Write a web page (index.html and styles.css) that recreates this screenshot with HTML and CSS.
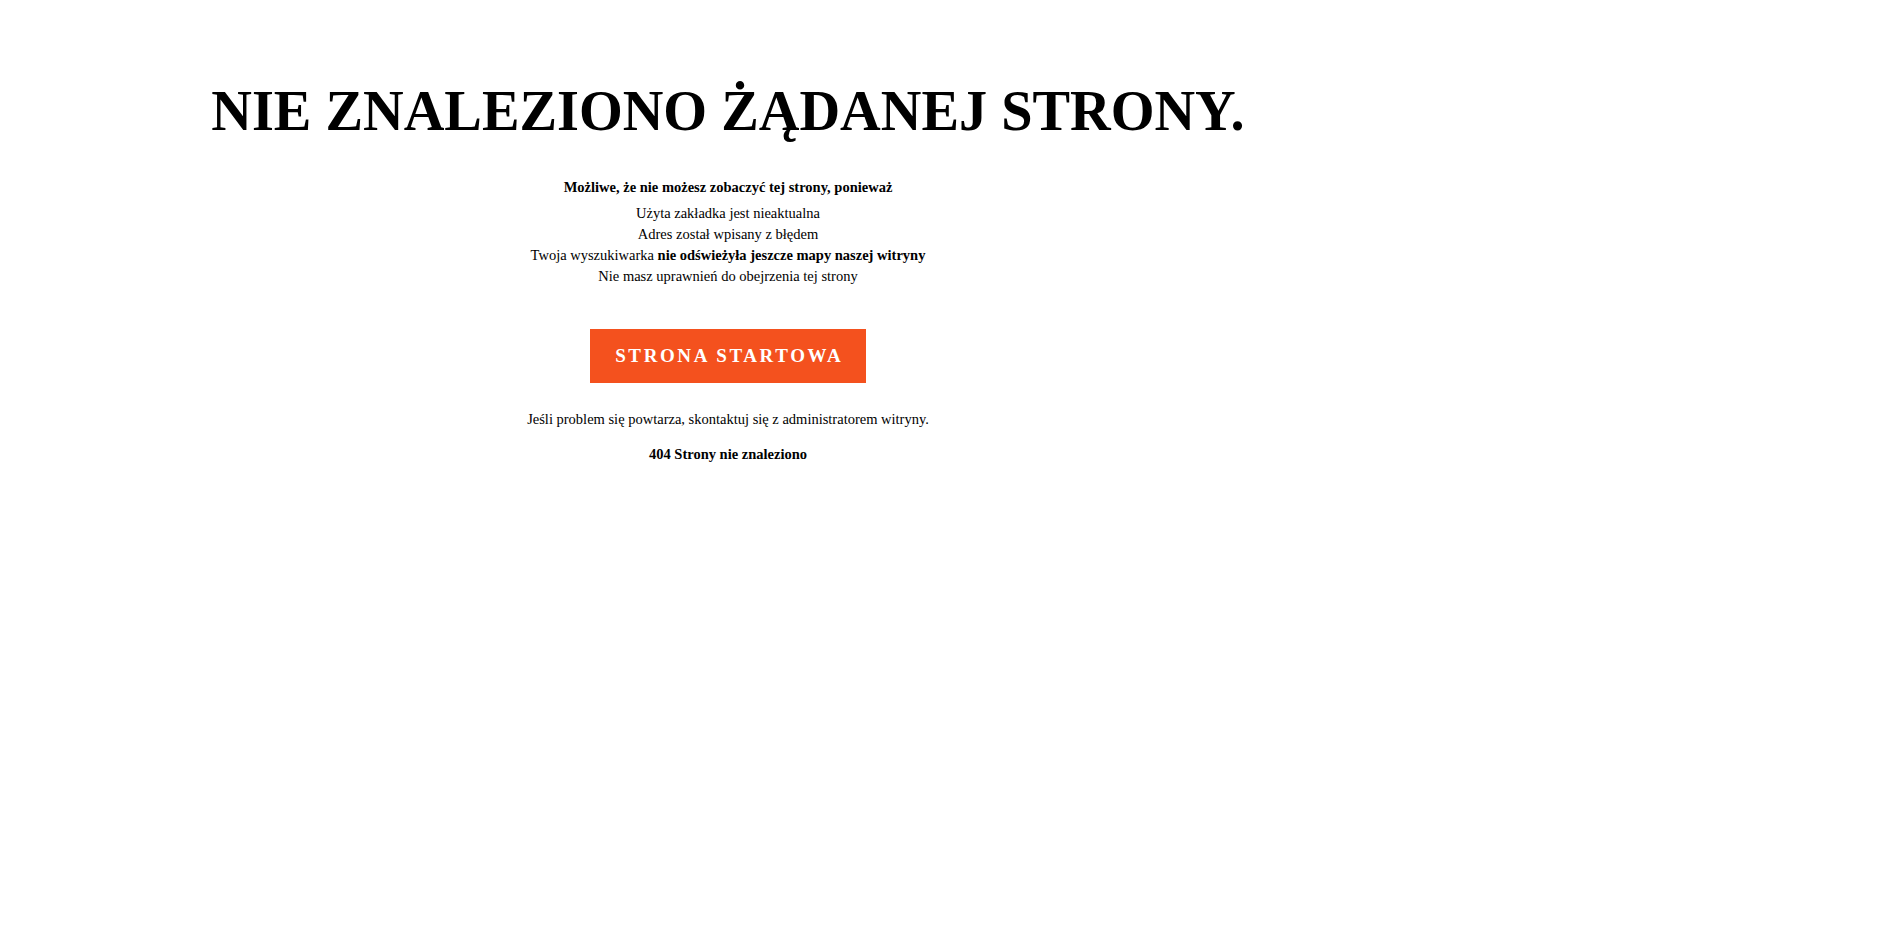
FILE: index.html
```html
<!DOCTYPE html>
<html lang="pl">
<head>
<meta charset="utf-8">
<title>404</title>
<link rel="stylesheet" href="styles.css">
</head>
<body>
<main class="page">
  <h1 class="title">NIE ZNALEZIONO ŻĄDANEJ STRONY.</h1>
  <p class="lead">Możliwe, że nie możesz zobaczyć tej strony, ponieważ</p>
  <ul class="reasons">
    <li>Użyta zakładka jest nieaktualna</li>
    <li>Adres został wpisany z błędem</li>
    <li>Twoja wyszukiwarka <strong>nie odświeżyła jeszcze mapy naszej witryny</strong></li>
    <li>Nie masz uprawnień do obejrzenia tej strony</li>
  </ul>
  <a class="home-btn" href="#">STRONA STARTOWA</a>
  <p class="note">Jeśli problem się powtarza, skontaktuj się z administratorem witryny.</p>
  <p class="code">404 Strony nie znaleziono</p>
</main>
</body>
</html>
```
FILE: styles.css
```css
html, body {
  margin: 0;
  padding: 0;
  background: #fff;
}
body {
  font-family: "Liberation Serif", "Times New Roman", serif;
  color: #000;
}
.page {
  width: 1456px;
  text-align: center;
  padding-top: 79px;
}
.title {
  font-size: 56.3px;
  font-weight: bold;
  margin: 0 0 36px;
  line-height: normal;
}
.lead {
  font-size: 14.5px;
  font-weight: bold;
  margin: 0 0 7px;
}
.reasons {
  list-style: none;
  margin: 0;
  padding: 0;
  font-size: 14.5px;
  line-height: 21px;
}
.home-btn {
  display: inline-block;
  margin-top: 42px;
  width: 276px;
  height: 54px;
  line-height: 54px;
  background: #f4511e;
  color: #fff;
  font-weight: bold;
  font-size: 19px;
  letter-spacing: 2.6px;
  text-indent: 2.6px;
  text-decoration: none;
}
.note {
  font-size: 14.5px;
  margin: 28px 0 0;
}
.code {
  font-size: 14.5px;
  font-weight: bold;
  margin: 18px 0 0;
}
```
